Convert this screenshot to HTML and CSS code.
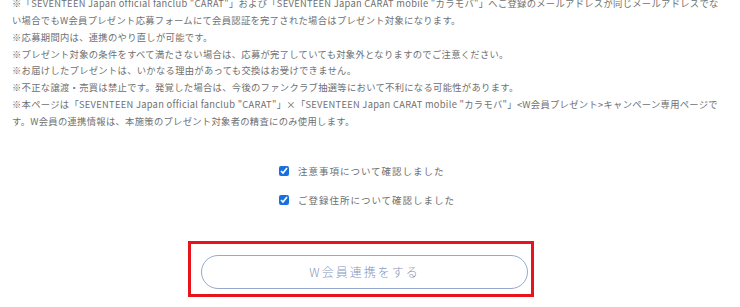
FILE: index.html
```html
<!DOCTYPE html>
<html lang="ja">
<head>
<meta charset="utf-8">
<link rel="stylesheet" href="styles.css">
</head>
<body>
<div class="page">
  <div class="notes">
    <p class="note">※「SEVENTEEN Japan official fanclub "CARAT"」および「SEVENTEEN Japan CARAT mobile "カラモバ"」へご登録のメールアドレスが同じメールアドレスでない場合でもW会員プレゼント応募フォームにて会員認証を完了された場合はプレゼント対象になります。</p>
    <p class="note">※応募期間内は、連携のやり直しが可能です。</p>
    <p class="note">※プレゼント対象の条件をすべて満たさない場合は、応募が完了していても対象外となりますのでご注意ください。</p>
    <p class="note">※お届けしたプレゼントは、いかなる理由があっても交換はお受けできません。</p>
    <p class="note">※不正な譲渡・売買は禁止です。発覚した場合は、今後のファンクラブ抽選等において不利になる可能性があります。</p>
    <p class="note">※本ページは「SEVENTEEN Japan official fanclub "CARAT"」×「SEVENTEEN Japan CARAT mobile "カラモバ"」&lt;W会員プレゼント&gt;キャンペーン専用ページです。W会員の連携情報は、本施策のプレゼント対象者の精査にのみ使用します。</p>
  </div>

  <div class="checks">
    <div class="check-list">
      <label class="check"><input type="checkbox" checked><span>注意事項について確認しました</span></label>
      <label class="check"><input type="checkbox" checked><span>ご登録住所について確認しました</span></label>
    </div>
  </div>

  <div class="action">
    <button class="link-btn" type="button">W会員連携をする</button>
  </div>
</div>
</body>
</html>
```

FILE: styles.css
```css
html, body {
  margin: 0;
  padding: 0;
  background: #ffffff;
}

body {
  font-family: "Noto Sans CJK JP", "Noto Sans", sans-serif;
  color: #707070;
  overflow: hidden;
}

.page {
  width: 740px;
  margin-top: -5px;
}

.notes {
  padding: 0 16px 0 12px;
}

.note {
  margin: 0;
  font-size: 9.3px;
  line-height: 16.85px;
  letter-spacing: 0.3px;
}

.checks {
  display: flex;
  justify-content: center;
  margin-top: 33px;
  padding-right: 6px;
}

.check-list {
  display: flex;
  flex-direction: column;
  gap: 13px;
}

.check {
  display: flex;
  align-items: center;
  gap: 9px;
  font-size: 9.5px;
  line-height: 16px;
  letter-spacing: 1px;
  color: #6e6e6e;
}

.check input {
  width: 10px;
  height: 10px;
  margin: 0;
  accent-color: #1a6fe0;
}

.action {
  box-sizing: border-box;
  width: 346px;
  height: 56px;
  margin-top: 33px;
  margin-left: 188px;
  border: 3px solid #e8141b;
  padding: 11px 3px 4px 10px;
}

.link-btn {
  display: block;
  box-sizing: border-box;
  width: 327px;
  height: 34px;
  border: 1.5px solid #98a8cc;
  border-radius: 17px;
  background: #ffffff;
  color: #8595bc;
  font-family: "Noto Sans CJK JP", "Noto Sans", sans-serif;
  font-size: 12px;
  font-weight: 300;
  letter-spacing: 2px;
  padding: 0;
}
```
